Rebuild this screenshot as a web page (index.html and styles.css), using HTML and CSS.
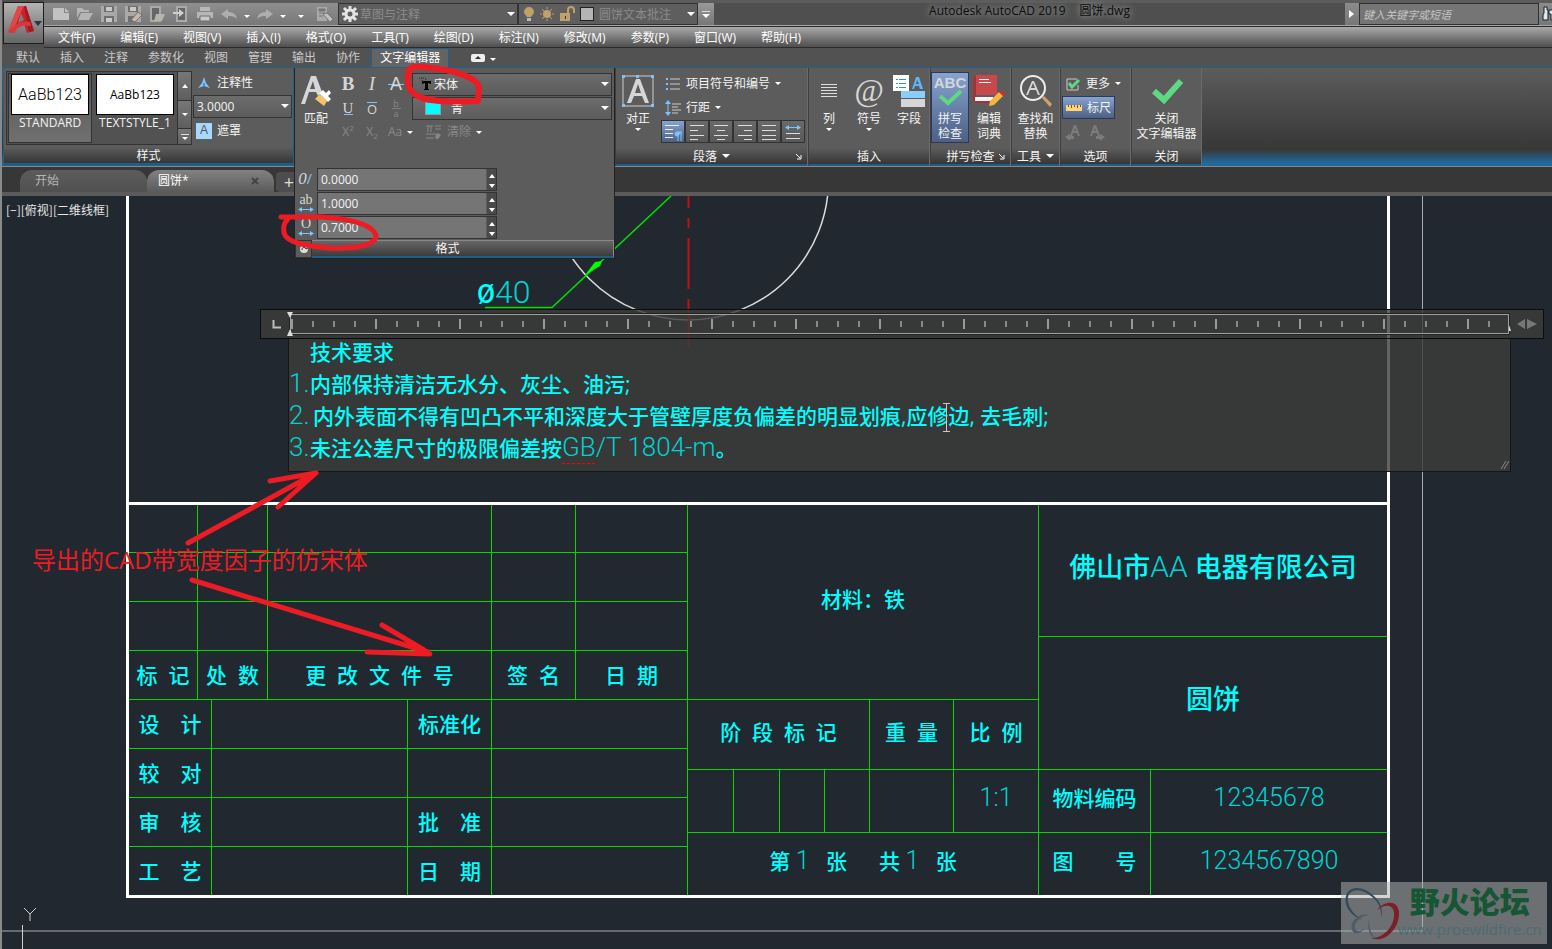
FILE: index.html
```html
<!DOCTYPE html>
<html lang="zh-CN">
<head>
<meta charset="UTF-8">
<title>Autodesk AutoCAD 2019 - 圆饼.dwg</title>
<link rel="stylesheet" href="styles.css">
</head>

<body>

<header class="top">
  <button class="app-button" aria-label="应用程序菜单">
    <svg width="40" height="40" viewBox="0 0 40 40">
      <path d="M4 29L14 3H22L30 28L23 30L20 21L13 24L10 30Z" fill="#c8232a"/>
      <path d="M14 3H20L17 9L8 30L4 29Z" fill="#e2484a"/>
      <path d="M20 3H22L30 28L25 29Z" fill="#a51a20"/>
      <path d="M17 10L20 17L14 20Z" fill="#7d7d7d"/>
      <path d="M4 29C10 21 18 18 26 19L27 23C19 21 13 24 10 30Z" fill="#d9393c"/>
      <path d="M30 18H38L34 23Z" fill="#2d3340"/>
    </svg>
  </button>

  <div class="title-bar">
    <div class="quick-access">
      <button class="qa" aria-label="新建"><svg width="24" height="20"><path d="M4 4H15V9H20V16H4ZM16 4L20 8H16Z" fill="#c2c2c2"/></svg></button>
      <button class="qa" aria-label="打开"><svg width="24" height="20"><path d="M4 4H9L11 6H16V8H7L4 14Z M8 9H20L16 16H5Z" fill="#b5b5b5"/></svg></button>
      <button class="qa" aria-label="保存"><svg width="24" height="20"><path d="M4 2H20V18H4Z" fill="#a9a9a9"/><path d="M7 2H17V8H7ZM7 12H17V18H7Z" fill="#6f6f6f"/><path d="M9 3H15V7H9ZM9 14H15V18H9Z" fill="#c9c9c9"/></svg></button>
      <button class="qa" aria-label="另存为"><svg width="24" height="20"><path d="M4 2H20V18H4Z" fill="#a9a9a9"/><path d="M7 2H17V8H7ZM7 12H13V18H7Z" fill="#6f6f6f"/><path d="M9 3H15V7H9Z" fill="#c9c9c9"/><path d="M10 16L17 8L21 11L14 18Z" fill="#c9b7a8" stroke="#6f6f6f"/></svg></button>
      <button class="qa" aria-label="从 Web 打开"><svg width="24" height="20"><path d="M6 3H15V17H6Z" fill="#666" stroke="#aaa" stroke-width="2"/><path d="M11 10H20L17 17H9Z" fill="#b9b4aa"/></svg></button>
      <button class="qa" aria-label="保存到 Web"><svg width="24" height="20"><path d="M8 3H17V17H8Z" fill="#666" stroke="#aaa" stroke-width="2"/><path d="M4 8H10V5L15 9L10 13V10H4Z" fill="#cfcfcf"/></svg></button>
      <button class="qa" aria-label="打印"><svg width="24" height="20"><path d="M7 3H17V7H7ZM4 8H20V14H4Z" fill="#b7b7b7"/><path d="M7 12H17V17H7Z" fill="#c8c8c8" stroke="#6f6f6f"/></svg></button>
      <button class="qa" aria-label="放弃"><svg width="24" height="20"><path d="M4 10L11 5V8C16 8 19 10 20 15C17 12 15 12 11 12V15Z" fill="#aeaeae"/></svg></button>
      <button class="qa-drop" aria-label="放弃列表"><span class="tri"></span></button>
      <button class="qa" aria-label="重做"><svg width="24" height="20"><path d="M20 10L13 5V8C8 8 5 10 4 15C7 12 9 12 13 12V15Z" fill="#aeaeae"/></svg></button>
      <button class="qa-drop" aria-label="重做列表"><span class="tri"></span></button>
      <button class="qa-drop qa-more" aria-label="自定义"><span class="tri"></span></button>
      <button class="qa" aria-label="特性匹配"><svg width="24" height="20"><path d="M4 3H14V17H4Z" fill="#a9a9a9"/><path d="M6 5H12V7H6ZM6 9H12M6 12H10" fill="#777" stroke="#777"/><path d="M10 10L14 9L20 15L17 18Z" fill="#c0c0c0" stroke="#777"/></svg></button>
    </div>
    <div class="combo combo-dark combo-workspace">
      <svg width="16" height="16" viewBox="0 0 16 16"><circle cx="8" cy="8" r="4" fill="none" stroke="#e4e4e4" stroke-width="3"/><path d="M8 0V3M8 13V16M0 8H3M13 8H16M2 2L5 5M11 11L14 14M14 2L11 5M5 11L2 14" stroke="#e4e4e4" stroke-width="3"/></svg>
      <select aria-label="工作空间"><option>草图与注释</option></select>
    </div>
    <div class="combo combo-dark combo-layer">
      <svg width="56" height="18" viewBox="0 0 56 18">
        <path d="M2 7A5 5 0 0 1 12 7C12 9 10 10 9 12H5C4 10 2 9 2 7Z" fill="#c0a268"/><path d="M5 13H9V16H5Z" fill="#b9b9b9"/>
        <circle cx="25" cy="9" r="4" fill="#c0a268"/><path d="M25 2V4M25 14V16M18 9H20M30 9H32M20 4L22 6M28 12L30 14M30 4L28 6M22 12L20 14" stroke="#c0a268" stroke-width="1"/>
        <path d="M38 8H48V16H38Z" fill="#c0a268"/><path d="M46 8V5A3 3 0 0 1 52 5V8" fill="none" stroke="#c0a268" stroke-width="2"/><path d="M43 11H44V14H43Z" fill="#333"/>
      </svg>
      <span class="layer-color"></span>
      <select aria-label="图层"><option>圆饼文本批注</option></select>
    </div>
    <button class="qa-chevron" aria-label="更多工具"><span class="bar"></span><span class="tri tri-big"></span></button>
    <h1 class="app-title"><span>Autodesk AutoCAD 2019</span><span>圆饼.dwg</span></h1>
    <div class="search">
      <button class="search-arrow" aria-label="展开搜索"><svg width="6" height="8"><path d="M0 0L5 4L0 8Z" fill="#fff"/></svg></button>
      <input type="text" placeholder="键入关键字或短语" aria-label="键入关键字或短语">
      <button class="search-go" aria-label="搜索"><svg width="16" height="16"><path d="M5 1H8V4H9V14H4V9L5 7ZM10 4H14V7H16V14H12V8H10Z" fill="#dfe6ee" stroke="#1b2026" stroke-width="1"/></svg></button>
    </div>
  </div>

  <nav class="menu-bar">
    <a href="#">文件(F)</a>
    <a href="#">编辑(E)</a>
    <a href="#">视图(V)</a>
    <a href="#">插入(I)</a>
    <a href="#">格式(O)</a>
    <a href="#">工具(T)</a>
    <a href="#">绘图(D)</a>
    <a href="#">标注(N)</a>
    <a href="#">修改(M)</a>
    <a href="#">参数(P)</a>
    <a href="#">窗口(W)</a>
    <a href="#">帮助(H)</a>
  </nav>
</header>

<nav class="ribbon-tabs">
  <a href="#">默认</a>
  <a href="#">插入</a>
  <a href="#">注释</a>
  <a href="#">参数化</a>
  <a href="#">视图</a>
  <a href="#">管理</a>
  <a href="#">输出</a>
  <a href="#">协作</a>
  <a href="#" class="active">文字编辑器</a>
  <button class="minimize" aria-label="最小化功能区"><svg width="14" height="8"><rect x="0" y="0" width="14" height="8" rx="2" fill="#eee"/><path d="M4 5L7 2L10 5Z" fill="#333"/></svg></button>
  <button class="minimize" aria-label="功能区选项"><span class="tri"></span></button>
</nav>

<div class="ribbon">
  <!-- text style -->
  <section class="panel panel-style">
    <div class="panel-body">
      <div class="gallery">
        <button class="style selected"><span class="swatch swatch-cad">AaBb123</span>STANDARD</button>
        <button class="style"><span class="swatch">AaBb123</span>TEXTSTYLE_1</button>
        <div class="gallery-scroll">
          <button aria-label="上一行"><span class="tri up"></span></button>
          <button aria-label="下一行"><span class="tri"></span></button>
          <button aria-label="展开"><span class="bar"></span><span class="tri"></span></button>
        </div>
      </div>
      <div class="rows style-rows">
        <button class="row"><svg width="16" height="16"><path d="M8 2L10 8L14 13L8 11L2 13L6 8Z" fill="#7cc4ff"/><path d="M8 8V11" stroke="#555"/></svg>注释性</button>
        <div class="combo combo-height"><select aria-label="文字高度"><option>3.0000</option></select></div>
        <button class="row"><span class="mask-icon">A</span>遮罩</button>
      </div>
    </div>
    <h2>样式</h2>
  </section>

  <!-- character format, slid open over the drawing -->
  <section class="panel panel-format">
    <div class="flyout">
      <div class="panel-body">
        <button class="big match">
          <svg width="34" height="34" viewBox="0 0 34 34"><path d="M2 29L12 1H17L23 17L19 21L17 17H10L6 29ZM11 14H16L14 6Z" fill="#d6d6d6"/><path d="M16 24L21 19L28 26L25 31Z" fill="#f6c468"/><path d="M20 18L24 15L27 18L30 15L32 18L29 21L32 24L29 27Z" fill="#fff"/></svg>
          匹配
        </button>
        <div class="format-rows">
          <div class="format-row">
            <button class="glyph serif bold">B</button>
            <button class="glyph serif italic">I</button>
            <button class="glyph strike">A</button>
            <div class="combo combo-font">
              <svg width="14" height="14"><path d="M0 1H7V3M0 1V3M3 1V7" fill="none" stroke="#333" stroke-dasharray="1 1"/><path d="M3 4H12V7H11L10 6H9V12H10V13H5V12H6V6H5L4 7H3Z" fill="#000"/></svg>
              <select aria-label="字体"><option>宋体</option></select>
            </div>
          </div>
          <div class="format-row">
            <button class="glyph under">U</button>
            <button class="glyph over">O</button>
            <button class="glyph dim stack"><span>b</span><span>a</span></button>
            <div class="combo combo-color">
              <span class="color-chip"></span>
              <select aria-label="颜色"><option>青</option></select>
            </div>
          </div>
          <div class="format-row">
            <button class="glyph dim">X<sup>2</sup></button>
            <button class="glyph dim">X<sub>2</sub></button>
            <button class="glyph dim case">Aa<span class="tri"></span></button>
            <button class="glyph dim clear"><svg width="16" height="16"><path d="M0 2H7M2 2V8M5 2V8M9 2H15M9 5H15M0 10H10M0 14H8" stroke="#888" fill="none"/><path d="M9 12L12 9L15 11L12 15H10Z" fill="#888"/></svg>清除<span class="tri"></span></button>
          </div>
        </div>
      </div>
      <div class="spinners">
        <label for="oblique" class="spin-icon" aria-label="倾斜角度"><i class="slanted">0</i><span class="slash">/</span></label>
        <div class="spinner"><input id="oblique" type="text" value="0.0000"><button aria-label="增加"><span class="tri up"></span></button><button aria-label="减少"><span class="tri"></span></button></div>
        <label for="tracking" class="spin-icon" aria-label="追踪"><span class="wide">ab</span><svg width="16" height="5"><path d="M2 2.500H14" stroke="#7cc4ff"/><path d="M0 2.500L4 0V5ZM16 2.500L12 0V5Z" fill="#7cc4ff"/></svg></label>
        <div class="spinner"><input id="tracking" type="text" value="1.0000"><button aria-label="增加"><span class="tri up"></span></button><button aria-label="减少"><span class="tri"></span></button></div>
        <label for="width" class="spin-icon" aria-label="宽度因子"><span class="wide">O</span><svg width="16" height="5"><path d="M2 2.500H14" stroke="#7cc4ff"/><path d="M0 2.500L4 0V5ZM16 2.500L12 0V5Z" fill="#7cc4ff"/></svg></label>
        <div class="spinner"><input id="width" type="text" value="0.7000"><button aria-label="增加"><span class="tri up"></span></button><button aria-label="减少"><span class="tri"></span></button></div>
      </div>
      <div class="flyout-title">
        <button class="pin" aria-label="固定"><svg width="10" height="10"><circle cx="5" cy="5" r="4" fill="#ddd"/><path d="M3 6A2 2 0 1 1 7 5L9 4" fill="none" stroke="#333"/></svg></button>
        <h2>格式</h2>
      </div>
    </div>
  </section>

  <!-- paragraph -->
  <section class="panel panel-paragraph">
    <div class="panel-body">
      <button class="big">
        <svg width="32" height="32"><path d="M3 1H29M3 31H29M1 3V29M31 3V29" stroke="#ccc"/><path d="M0 0H3V3H0ZM14 0H17V3H14ZM29 0H32V3H29ZM0 29H3V32H0ZM29 29H32V32H29Z" fill="#7cc4ff"/><path d="M5 28L14 4H18L27 28H23L20 21H12L9 28ZM13 18H19L16 9Z" fill="#d6d6d6"/></svg>
        对正<span class="tri"></span>
      </button>
      <div class="rows">
        <button class="row"><svg width="16" height="16"><path d="M5 3H15M5 8H15M5 13H15" stroke="#ccc"/><path d="M1 2H3V4H1ZM1 7H3V9H1ZM1 12H3V14H1Z" fill="#7cc4ff"/></svg>项目符号和编号<span class="tri"></span></button>
        <button class="row"><svg width="16" height="16"><path d="M3 2V14" stroke="#7cc4ff" stroke-width="1"/><path d="M0 4L3 0L6 4ZM0 12L3 16L6 12Z" fill="#7cc4ff"/><path d="M7 4H16M7 7H13M7 10H16M7 13H13" stroke="#ccc"/></svg>行距<span class="tri"></span></button>
        <div class="aligns">
          <button class="on" aria-label="默认"><svg width="20" height="18"><path d="M2 2.500H16M2 6.500H10M2 10.500H10M2 14.500H10" stroke="#eee"/><path d="M18 9V18M15 9V18M19 9H14A2 2 0 0 0 14 13H15" stroke="#7cc4ff" fill="#7cc4ff"/></svg></button>
          <button aria-label="左对齐"><svg width="20" height="18"><path d="M3 2.500H17M3 7.500H11M3 12.500H17M3 16.500H11" stroke="#ddd"/></svg></button>
          <button aria-label="居中"><svg width="20" height="18"><path d="M3 2.500H17M6 7.500H14M3 12.500H17M6 16.500H14" stroke="#ddd"/></svg></button>
          <button aria-label="右对齐"><svg width="20" height="18"><path d="M3 2.500H17M9 7.500H17M3 12.500H17M9 16.500H17" stroke="#ddd"/></svg></button>
          <button aria-label="两端对齐"><svg width="20" height="18"><path d="M3 2.500H17M3 7.500H17M3 12.500H17M3 16.500H17" stroke="#ddd"/></svg></button>
          <button aria-label="分散对齐"><svg width="20" height="18"><path d="M5 4.500H15" stroke="#7cc4ff"/><path d="M2 4.500L6 2V7ZM18 4.500L14 2V7Z" fill="#7cc4ff"/><path d="M3 10.500H17M3 15.500H17" stroke="#ddd"/></svg></button>
        </div>
      </div>
    </div>
    <h2>段落<span class="tri tri-big"></span><svg class="launcher" width="6" height="6"><path d="M0 0L4 4M5 1V5H1" stroke="#fff" fill="none"/></svg></h2>
  </section>

  <!-- insert -->
  <section class="panel panel-insert">
    <div class="panel-body">
      <button class="big"><svg width="32" height="32"><path d="M8 9.500H24M8 12.500H24M8 15.500H24M8 18.500H24M8 21.500H24" stroke="#ddd"/></svg>列<span class="tri"></span></button>
      <button class="big"><span class="at">@</span>符号<span class="tri"></span></button>
      <button class="big"><svg width="32" height="32"><path d="M0 0H16V16H0Z" fill="#fff"/><path d="M6 4.500H13M6 8.500H13M6 12.500H13" stroke="#2f8fe0"/><path d="M3 4H5V5H3ZM3 8H5V9H3ZM3 12H5V13H3Z" fill="#2f8fe0"/><path d="M19 14L23 2H26L30 14H27L26 11H22L21 14ZM23 9H26L24 5Z" fill="#5fb4f4"/><path d="M8 16H32V23H8Z" fill="#8ccdff"/><path d="M8 24H32V32H8Z" fill="#d6d6d6"/></svg>字段</button>
    </div>
    <h2>插入</h2>
  </section>

  <!-- spell check -->
  <section class="panel panel-spell">
    <div class="panel-body">
      <button class="big on"><svg width="32" height="32"><text x="16" y="13" text-anchor="middle" class="abc">ABC</text><path d="M6 21L14 28L27 16" fill="none" stroke="#5fd884" stroke-width="4"/></svg>拼写<br>检查</button>
      <button class="big"><svg width="32" height="32"><path d="M3 0H24V20H3V27H1V3Z" fill="#c9484c"/><path d="M0 3L3 0V28L0 26Z" fill="#a43337"/><path d="M6 4.500H16M6 7.500H18" stroke="#fff"/><path d="M2 22H20V26H2Z" fill="#f2f2f2"/><path d="M2 26H20V28H2Z" fill="#a43337"/><path d="M17 26L26 17L30 21L21 30L16 31Z" fill="#f6b73c"/><path d="M26 17L29 16L32 19L30 21Z" fill="#e22"/></svg>编辑<br>词典</button>
    </div>
    <h2>拼写检查<svg class="launcher" width="6" height="6"><path d="M0 0L4 4M5 1V5H1" stroke="#fff" fill="none"/></svg></h2>
  </section>

  <!-- tools -->
  <section class="panel panel-tools">
    <div class="panel-body">
      <button class="big"><svg width="32" height="32"><path d="M22 23L24 21L32 29L30 32Z" fill="#d3a06b"/><circle cx="13" cy="13" r="12" fill="none" stroke="#eee" stroke-width="2"/><path d="M6 20L12 6H14L20 20H18L16 15H10L8 20ZM11 13H15L13 8Z" fill="#d6d6d6"/></svg>查找和<br>替换</button>
    </div>
    <h2>工具<span class="tri tri-big"></span></h2>
  </section>

  <!-- options -->
  <section class="panel panel-options">
    <div class="panel-body rows">
      <button class="row"><svg width="16" height="16"><path d="M13 9V14H2V3H12" fill="none" stroke="#ccc"/><path d="M4 7L7 11L14 4" fill="none" stroke="#5fd884" stroke-width="3"/></svg>更多<span class="tri"></span></button>
      <button class="row on"><svg width="16" height="16"><path d="M0 5H16V11H0Z" fill="#ffd76e"/><path d="M2.500 5V7M5.500 5V8M8.500 5V7M11.500 5V8M14.500 5V7" stroke="#555"/></svg>标尺</button>
      <div class="undo-pair">
        <button class="glyph dim" aria-label="放弃"><svg width="16" height="17"><path d="M5 12L9 1H11L15 12H13L12 9H8L7 12ZM9 7H11L10 4Z" fill="#7c7c7c"/><path d="M0 13L5 10V12H9V15H5V17Z" fill="#7c7c7c"/></svg></button>
        <button class="glyph dim" aria-label="重做"><svg width="16" height="17"><path d="M1 12L5 1H7L11 12H9L8 9H4L3 12ZM5 7H7L6 4Z" fill="#7c7c7c"/><path d="M16 13L11 10V12H7V15H11V17Z" fill="#7c7c7c"/></svg></button>
      </div>
    </div>
    <h2>选项</h2>
  </section>

  <!-- close -->
  <section class="panel panel-close">
    <div class="panel-body">
      <button class="big"><svg width="32" height="32"><path d="M3 16L13 25L30 6" fill="none" stroke="#5fd884" stroke-width="6"/></svg>关闭<br>文字编辑器</button>
    </div>
    <h2>关闭</h2>
  </section>
</div>

<nav class="doc-tabs">
  <a href="#">开始</a>
  <a href="#" class="current">圆饼*<svg width="8" height="8"><path d="M1 1L7 7M7 1L1 7" stroke="#444" stroke-width="2"/></svg></a>
  <button aria-label="新图形">+</button>
</nav>

<main class="canvas">
  <div class="view-label">[−][俯视][二维线框]</div>

  <svg class="geometry" width="1550" height="753" viewBox="2 196 1550 753">
    <path d="M1422.500 196V931M2 931H1423" stroke="#a9acb0" fill="none"/>
    <circle cx="688.500" cy="180" r="140" fill="none" stroke="#dcdcdc" stroke-width="1.500"/>
    <path d="M485 307.500H552L671 196" fill="none" stroke="#00e000" stroke-width="1.500"/>
    <path d="M585 275L595 262L602 261L600 266Z" fill="#00ff00"/>
    <path d="M688.500 196V208M688.500 218V228M688.500 238V289M688.500 299V347" stroke="#c01015" stroke-width="2"/>
    <path d="M24 908L30 914L36 908M30 914V921M22.500 925V949" stroke="#d0d0d0" fill="none"/>
  </svg>
  <div class="dimension"><b>Ø</b>40</div>

  <div class="frame">
    <div class="title-block">
      <div class="tb-left">
        <table class="changes">
          <colgroup><col class="w69"><col class="w70"><col class="w224"><col class="w84"><col class="w112"></colgroup>
          <tr><td></td><td></td><td></td><td></td><td></td></tr>
          <tr><td></td><td></td><td></td><td></td><td></td></tr>
          <tr><td></td><td></td><td></td><td></td><td></td></tr>
          <tr><th>标  记</th><th>处  数</th><th>更  改  文  件  号</th><th>签  名</th><th>日  期</th></tr>
        </table>
        <table class="signs">
          <colgroup><col class="w83"><col class="w196"><col class="w84"><col class="w196"></colgroup>
          <tr><th>设　计</th><td></td><th>标准化</th><td></td></tr>
          <tr><th>较　对</th><td></td><td></td><td></td></tr>
          <tr><th>审　核</th><td></td><th>批　准</th><td></td></tr>
          <tr><th>工　艺</th><td></td><th>日　期</th><td></td></tr>
        </table>
      </div>
      <table class="tb-middle">
        <colgroup><col class="w46"><col class="w46"><col class="w45"><col class="w45"><col class="w84"><col class="w85"></colgroup>
        <tr class="h195"><td colspan="6">材料：铁</td></tr>
        <tr class="h70"><th colspan="4">阶  段  标  记</th><th>重  量</th><th>比  例</th></tr>
        <tr class="h63"><td></td><td></td><td></td><td></td><td></td><td><span class="thin">1:1</span></td></tr>
        <tr class="h62"><td colspan="6">第 <span class="thin">1</span>   张　  共 <span class="thin">1</span>   张</td></tr>
      </table>
      <table class="tb-right">
        <colgroup><col class="w112"><col class="w236"></colgroup>
        <tr class="h132"><td colspan="2" class="large">佛山市<span class="thin">AA</span> 电器有限公司</td></tr>
        <tr class="h133"><td colspan="2" class="large">圆饼</td></tr>
        <tr class="h63"><th>物料编码</th><td><span class="thin">12345678</span></td></tr>
        <tr class="h62"><th>图　　号</th><td><span class="thin">1234567890</span></td></tr>
      </table>
    </div>
  </div>

  <!-- in-place text editor -->
  <div class="editor">
    <div class="ruler">
      <svg width="29" height="28"><path d="M12.500 10V17.500H20" fill="none" stroke="#bbb" stroke-width="2"/></svg>
      <svg class="ruler-scale" height="28">
        <defs>
          <pattern id="ticks" width="84" height="28" patternUnits="userSpaceOnUse">
            <path d="M1 4V14" stroke="#999" stroke-width="2"/>
            <path d="M22 6V12M43 6V12M64 6V12" stroke="#888" stroke-width="2"/>
          </pattern>
        </defs>
        <rect x="0" y="0" width="100%" height="28" fill="url(#ticks)"/>
      </svg>
      <svg width="34" height="28"><path d="M0 15L2 21H0Z" fill="#ddd"/><path d="M8 14L16 9V19ZM18 9V19L28 14Z" fill="#777"/></svg>
      <svg class="indent" width="6" height="24"><path d="M0 0H6L3 6ZM0 24H6L3 17Z" fill="#ddd"/></svg>
    </div>
    <div class="note" contenteditable="true" role="textbox" aria-label="多行文字" spellcheck="false">
      <p class="note-head">技术要求</p>
      <p><span class="thin num">1.</span>内部保持清洁无水分、灰尘、油污;</p>
      <p><span class="thin num num-wide">2.</span>内外表面不得有凹凸不平和深度大于管壁厚度负偏差的明显划痕,应修边, 去毛刺;</p>
      <p><span class="thin num">3.</span>未注公差尺寸的极限偏差按<span class="thin code"><span class="misspelt">GB</span>/T 1804-m</span>。</p>
    </div>
    <svg class="grip" width="10" height="10"><path d="M1 9L6 1M4 9L9 1" stroke="#888"/></svg>
  </div>
  <svg class="ibeam" width="7" height="29"><path d="M0 .500H7M3.500 0V29M0 28.500H7" stroke="#d9c3b8"/></svg>

  <div class="watermark">
    <svg width="62" height="62" viewBox="0 0 62 62">
      <path d="M5 22C2 6 16 2 28 10C38 17 43 25 40 36C41 24 36 18 27 12C17 5 5 8 7 20C9 28 14 33 21 38C12 34 7 29 5 22Z" fill="#33495c"/>
      <path d="M36 28C44 18 57 18 58 30C59 46 44 62 30 56C40 57 54 46 53 31C52 22 44 22 36 28Z" fill="#7c1f2b"/>
      <path d="M28 33C18 30 8 40 11 48C13 53 20 52 24 46C20 50 15 50 14 46C13 40 20 34 28 33ZM28 38C26 46 28 54 35 57C30 52 28 46 28 38Z" fill="#4f5d6b"/>
    </svg>
    <div class="watermark-text">
      <strong>野火论坛</strong>
      <span>www.proewildfire.cn</span>
    </div>
  </div>
</main>

<!-- red pen remarks drawn over the window -->
<div class="remark">导出的CAD带宽度因子的仿宋体</div>
<svg class="pen" width="560" height="700">
  <path d="M408 72C409 66 418 66 432 68C452 70 470 76 477 83C481 88 478 94 478 101C460 102 436 102 422 98C410 94 405 84 409 72" stroke-width="6"/>
  <path d="M281 217H322C352 219 372 225 376 235C377 246 352 249 330 248C306 246 287 243 284 233C283 226 284 223 288 219" stroke-width="5"/>
  <path d="M188 543L316 473M270 481L316 473L278 507" stroke-width="5"/>
  <path d="M192 580L428 652M382 625L424 650M367 652L430 654" stroke-width="5"/>
</svg>

</body>
</html>
```

FILE: styles.css
```css
* {
  box-sizing: border-box;
}
body {
  position: relative;
  display: flex;
  flex-direction: column;
  min-height: 100vh;
  margin: 0;
  overflow-x: hidden;
  border-left: 2px solid #8a8a8a;
  background-color: #4f4f4f;
  color: #f4f4f4;
  font-family: "Open Sans", "Noto Sans CJK SC", sans-serif;
  font-size: 12px;
  line-height: 15px;
}
a {
  color: inherit;
  text-decoration: none;
}
button, select, input {
  margin: 0;
  padding: 0;
  border: 0;
  background: none;
  color: inherit;
  font: inherit;
}
h1, h2, p {
  margin: 0;
  font-size: 12px;
  font-weight: 400;
}
svg {
  display: block;
  flex: none;
}

/* small arrows */
.tri {
  display: inline-block;
  border: 3px solid transparent;
  border-top-color: #fff;
  border-bottom: 0;
}
.tri.up {
  border-top: 0;
  border-bottom: 4px solid #fff;
}
.tri-big {
  border-width: 4px;
  border-bottom: 0;
}
.bar {
  display: block;
  width: 8px;
  height: 1px;
  margin-bottom: 2px;
  background-color: #ddd;
}

/* drop-downs */
.combo {
  position: relative;
  display: flex;
  align-items: center;
  height: 23px;
  border: 1px solid #333;
  background: linear-gradient(#6c6c6c, #5c5c5c);
}
.combo::after {
  content: "";
  position: absolute;
  right: 2px;
  top: 8px;
  border: 4px solid transparent;
  border-top: 4px solid #fff;
  border-bottom: 0;
  pointer-events: none;
}
.combo select {
  flex: 1;
  min-width: 0;
  height: 100%;
  appearance: none;
}

/* title bar */
.top {
  display: grid;
  grid-template-columns: 42px 1fr;
  grid-template-rows: 26px 22px;
}
.app-button {
  grid-row: 1 / 3;
  margin: 2px 0 4px 1px;
  border: 1px solid #1c1c1c;
  background: linear-gradient(#b4b4b4, #666);
}
.title-bar {
  display: flex;
  align-items: flex-start;
  padding-top: 3px;
  border-bottom: 1px solid #a6a6a6;
  box-shadow: inset 0 3px #5c5c5c;
}
.quick-access {
  display: flex;
  align-items: center;
  width: 294px;
  height: 22px;
  padding-left: 5px;
  background: linear-gradient(#8f8f8f, #787878);
}
.qa {
  width: 24px;
}
.qa-drop {
  width: 12px;
  line-height: 5px;
}
.qa-more {
  margin: 0 6px;
}
.combo-dark {
  width: 180px;
  height: 22px;
  padding-left: 2px;
  background: #5e5e5e;
  color: #8b8b8b;
}
.combo-workspace svg {
  margin: 0 2px 0 1px;
}
.layer-color {
  width: 14px;
  height: 14px;
  margin: 0 5px 0 2px;
  border: 1px solid #222;
  background-color: #b4b4b4;
}
.combo-layer {
  padding-left: 3px;
}
.qa-chevron {
  display: flex;
  flex-direction: column;
  align-items: center;
  justify-content: center;
  width: 16px;
  height: 22px;
  background: linear-gradient(#999, #777);
}
.app-title {
  display: flex;
  flex: 1;
  justify-content: center;
  gap: 14px;
  color: #0c0c0c;
  text-shadow: 0 0 8px #999, 0 0 6px #888;
}
.search {
  display: flex;
  height: 22px;
  background: linear-gradient(#8c8c8c, #777);
}
.search-arrow {
  width: 14px;
  padding-left: 4px;
}
.search input {
  width: 180px;
  padding-left: 3px;
  border: 1px solid #2f2f2f;
  background-color: #757575;
  font-size: 11px;
}
.search input::placeholder {
  color: #c4c4c4;
  font-style: italic;
}
.search-go {
  width: 13px;
  overflow: hidden;
}

.menu-bar {
  display: flex;
  align-items: center;
  gap: 25px;
  padding-left: 14px;
  border-top: 1px solid #2a2a2a;
  border-bottom: 1px solid #2c2c2c;
  background: linear-gradient(#a9a9a9, #4e4e4e);
  color: #fff;
}

/* ribbon tabs */
.ribbon-tabs {
  display: flex;
  align-items: flex-end;
  height: 20px;
  padding-left: 6px;
  border-bottom: 1px solid #21608c;
  background-color: #525252;
  color: #c9c9c9;
}
.ribbon-tabs a {
  padding: 0 10px 1px 10px;
  line-height: 17px;
  margin-left: -2px;
  margin-right: 2px;
}
.ribbon-tabs a:first-child {
  margin-left: 0;
  padding-left: 8px;
}
.ribbon-tabs .active {
  padding: 0 8px 1px 8px;
  margin: 0 22px 0 -1px;
  border: 1px solid #21608c;
  border-bottom: 0;
  background-color: #646464;
  color: #fff;
}
.minimize {
  align-self: center;
  margin-right: 5px;
  line-height: 5px;
}

/* ribbon */
.ribbon {
  display: flex;
  height: 99px;
  border-bottom: 1px solid #888;
  background: linear-gradient(#5c5c5c, #373737 83%, #1f6b9f 97%);
}
.panel {
  position: relative;
  display: flex;
  flex: none;
  flex-direction: column;
  border-left: 1px solid #3e3e3e;
  border-right: 1px solid #6a6a6a;
  background-color: #5c5c5c;
}
.panel-body {
  display: flex;
  flex: 1;
  align-items: flex-start;
  padding-top: 4px;
}
.panel h2 {
  display: flex;
  align-items: center;
  justify-content: center;
  gap: 5px;
  height: 18px;
  border-bottom: 2px solid #1f5d88;
  background: linear-gradient(#5c5c5c, #363636);
}
.launcher {
  position: absolute;
  right: 5px;
  bottom: 6px;
}
.rows {
  display: flex;
  flex-direction: column;
  gap: 1px;
}
.row {
  display: flex;
  align-items: center;
  gap: 5px;
  height: 23px;
}
.big {
  flex: none;
  width: 40px;
  padding-top: 3px;
  text-align: center;
  line-height: 15px;
}
.big svg {
  margin: 0 auto 4px;
}
.big .tri {
  display: block;
  width: 6px;
  margin: 2px auto 0;
}
.on {
  border: 1px solid #2b3a5a;
  background: linear-gradient(#86a3d2, #4d6084);
}

.panel-style {
  width: 291px;
  margin-left: 1px;
  border: 1px solid #21608c;
  border-top: 0;
}
.panel-style .panel-body {
  padding: 3px 0 0 2px;
}
.gallery {
  display: flex;
  height: 74px;
  border: 1px solid #333;
  background-color: #525252;
}
.style {
  display: flex;
  flex-direction: column;
  align-items: center;
  width: 84px;
  margin: 1px 0 1px 1px;
  border: 1px solid transparent;
}
.style.selected {
  border-color: #333;
  background: linear-gradient(#555, #707070);
}
.swatch {
  width: 78px;
  height: 41px;
  border: 1px solid #000;
  background-color: #fff;
  color: #000;
  font-size: 12px;
  line-height: 40px;
}
.swatch-cad {
  font-family: Roboto, sans-serif;
  font-size: 16px;
  font-weight: 300;
}
.gallery-scroll {
  display: flex;
  flex-direction: column;
  width: 14px;
  border-left: 1px solid #333;
}
.gallery-scroll button {
  display: flex;
  flex: 1;
  flex-direction: column;
  align-items: center;
  justify-content: center;
  border-bottom: 1px solid #333;
  background: linear-gradient(#777, #5e5e5e);
}
.gallery-scroll button:last-child {
  flex: none;
  height: 15px;
  border-bottom: 0;
}
.style-rows {
  margin-left: 1px;
}
.style-rows .row {
  padding-left: 3px;
}
.combo-height {
  width: 99px;
  padding-left: 3px;
}
.mask-icon {
  width: 16px;
  height: 16px;
  background-color: #a9d8ff;
  color: #555;
  font-family: "Liberation Sans", sans-serif;
}

.panel-format {
  z-index: 2;
  width: 321px;
}
.flyout {
  position: absolute;
  top: 0;
  left: -1px;
  right: -1px;
  height: 191px;
  display: flex;
  flex-direction: column;
  border: 1px solid #222;
  border-top: 0;
  background-color: #5c5c5c;
}
.flyout .panel-body {
  padding-left: 1px;
}
.match {
  width: 40px;
}
.match svg {
  margin-bottom: 2px;
}
.format-row {
  display: flex;
  align-items: center;
  height: 24px;
}
.glyph {
  width: 24px;
  height: 24px;
  color: #d6d6d6;
  line-height: 22px;
}
.serif {
  font-family: "Liberation Serif", serif;
  font-size: 19px;
}
.bold {
  font-weight: 700;
}
.italic {
  font-style: italic;
}
.strike {
  background: linear-gradient(#7cc4ff, #7cc4ff) center 12px / 16px 1px no-repeat;
  font-family: "Liberation Sans", sans-serif;
  font-size: 18px;
}
.under {
  background: linear-gradient(#7cc4ff, #7cc4ff) center 18px / 9px 1px no-repeat;
  font-family: "Liberation Serif", serif;
  font-size: 15px;
}
.over {
  background: linear-gradient(#7cc4ff, #7cc4ff) center 6px / 10px 1px no-repeat;
  font-size: 13px;
  line-height: 26px;
}
.dim {
  color: #898989;
}
.stack span {
  display: block;
  width: 9px;
  margin: 0 auto;
  font-size: 9px;
  line-height: 9px;
}
.stack span + span {
  border-top: 1px solid #808080;
}
.glyph sup, .glyph sub {
  font-size: 8px;
  line-height: 1px;
}
.case {
  display: flex;
  align-items: center;
  gap: 5px;
  width: 36px;
  padding-left: 4px;
}
.clear {
  display: flex;
  align-items: center;
  gap: 5px;
  width: 70px;
  margin-left: 6px;
}
.combo-font, .combo-color {
  width: 200px;
  margin-left: 4px;
  padding-left: 6px;
  gap: 1px;
}
.color-chip {
  width: 16px;
  height: 13px;
  margin: 0 9px 0 6px;
  border: 1px solid #999;
  background-color: #00ffff;
}
.spinners {
  display: grid;
  grid-template-columns: 18px 180px;
  gap: 1px 3px;
  padding-left: 1px;
  margin-bottom: 1px;
}
.spin-icon {
  height: 23px;
  color: #d6d6d6;
  line-height: 22px;
  text-align: center;
}
.spin-icon svg {
  margin-left: 2px;
}
.slanted {
  font-family: "Liberation Serif", serif;
  font-size: 17px;
}
.slash {
  color: #7cc4ff;
  font-size: 14px;
}
.wide {
  display: block;
  height: 15px;
  margin-left: 2px;
  font-family: "Liberation Serif", serif;
  font-size: 14px;
  line-height: 16px;
}
.spinner {
  display: grid;
  grid-template-columns: 1fr 10px;
  height: 23px;
  border: 1px solid #333;
}
.spinner input {
  grid-row: 1 / 3;
  min-width: 0;
  padding-left: 3px;
  background-color: #757575;
}
.spinner button {
  margin-left: 1px;
  background-color: #4a4a4a;
  line-height: 6px;
}
.spinner .tri {
  border-top-width: 4px;
}
.spinner .tri.up {
  border-top-width: 0;
}
.flyout-title {
  display: flex;
  height: 18px;
}
.pin {
  width: 17px;
  padding-left: 3px;
  border: 1px solid #333;
}
.flyout-title h2 {
  flex: 1;
  height: 100%;
  padding-right: 30px;
  border-top: 1px solid #888;
  border-right: 1px solid #888;
  background: linear-gradient(#666, #3c3c3c);
}

.panel-paragraph {
  width: 193px;
}
.panel-paragraph > .panel-body {
  padding-left: 2px;
}
.panel-paragraph .rows {
  margin-left: 3px;
}
.panel-paragraph .row {
  padding-left: 4px;
}
.aligns {
  display: flex;
}
.aligns button {
  width: 24px;
  height: 23px;
  padding-left: 1px;
  border: 1px solid #333;
  background: linear-gradient(#6a6a6a, #585858);
}
.aligns .on {
  background: linear-gradient(#86a3d2, #4d6084);
}
.panel-insert {
  width: 122px;
}
.at {
  display: block;
  height: 36px;
  color: #d6d6d6;
  font-family: "Liberation Serif", serif;
  font-size: 32px;
  font-style: italic;
  line-height: 30px;
}
.panel-spell {
  width: 81px;
}
.panel-spell .on {
  width: 38px;
  padding-top: 2px;
  padding-bottom: 1px;
}
.abc {
  fill: #d6d6d6;
  font-family: "Liberation Sans", sans-serif;
  font-size: 15px;
  font-weight: 700;
}
.panel-tools {
  width: 49px;
}
.panel-tools .panel-body {
  justify-content: center;
}
.panel-options {
  width: 71px;
}
.panel-options .row {
  padding-left: 4px;
}
.panel-options .row.on {
  padding: 0 3px;
  margin-left: 1px;
}
.undo-pair {
  display: flex;
  padding-left: 4px;
}
.panel-close {
  width: 71px;
}
.panel-close .big {
  width: 69px;
}

/* document tabs */
.doc-tabs {
  display: flex;
  align-items: flex-end;
  height: 29px;
  padding-left: 18px;
  border-bottom: 4px solid #5b5b5b;
  background-color: #373737;
  color: #b5b5b5;
}
.doc-tabs a {
  width: 127px;
  height: 22px;
  padding-left: 15px;
  border-radius: 12px 12px 0 0;
  background: linear-gradient(#5c5c5c, #505050);
  line-height: 22px;
}
.doc-tabs .current {
  display: flex;
  align-items: center;
  justify-content: space-between;
  padding: 0 15px 0 11px;
  background: linear-gradient(#828282, #5b5b5b);
  color: #fff;
}
.doc-tabs button {
  width: 26px;
  height: 20px;
  margin-left: 2px;
  border-radius: 4px;
  background-color: #4d4d4d;
  color: #ddd;
  font-size: 18px;
  line-height: 18px;
}

/* drawing area */
.canvas {
  position: relative;
  flex: 1;
  overflow: hidden;
  background-color: #212830;
  color: #00ffff;
}
.view-label {
  padding: 6px 4px;
  color: #e6e6e6;
  font-family: "Noto Sans CJK SC", sans-serif;
  font-size: 12px;
}
.geometry {
  position: absolute;
  top: 0;
  left: 0;
}
.thin {
  color: #00d2d2;
  font-family: Roboto, sans-serif;
  font-weight: 300;
  line-height: 20px;
}
.dimension {
  position: absolute;
  top: 78px;
  left: 475px;
  color: #00d2d2;
  font-family: Roboto, sans-serif;
  font-size: 32px;
  font-weight: 300;
  line-height: 36px;
}
.dimension b {
  color: #00ffff;
  font-size: 26px;
  font-weight: 500;
}
.frame {
  position: absolute;
  top: 0;
  left: 124px;
  padding-top: 306px;
  border: 3px solid #fff;
  border-top: 0;
}
.title-block {
  display: flex;
  border-top: 3px solid #fff;
}
.title-block table {
  table-layout: fixed;
  border-spacing: 0;
}
.title-block td, .title-block th {
  padding: 0;
  border: 0 solid #00d800;
  border-width: 0 1px 1px 0;
  font-size: 21px;
  font-weight: 500;
  line-height: 28px;
  text-align: center;
  white-space: pre;
}
.title-block .tb-middle td, .title-block .tb-middle th,
.title-block .tb-right td, .title-block .tb-right th {
  padding-bottom: 6px;
}
.title-block .thin {
  font-size: 25px;
}
.title-block .tb-right .large {
  padding-bottom: 8px;
  font-size: 27px;
}
.title-block .large .thin {
  font-size: 30px;
}
.title-block tr {
  height: 49px;
}
.changes tr:first-child {
  height: 48px;
}
.changes, .signs {
  width: 559px;
}
.signs tr:last-child {
  height: 48px;
}
.signs tr:last-child > *, .tb-middle tr:last-child > *, .tb-right tr:last-child > * {
  border-bottom: 0;
}
.tb-middle {
  width: 351px;
}
.tb-right {
  width: 348px;
}
.tb-right td {
  border-right: 0;
}
.title-block .h195 { height: 195px; }
.title-block .h133 { height: 133px; }
.title-block .h132 { height: 132px; }
.title-block .h70 { height: 70px; }
.title-block .h63 { height: 63px; }
.title-block .h62 { height: 62px; }
.w45 { width: 45px; }
.w46 { width: 46px; }
.w69 { width: 69px; }
.w70 { width: 70px; }
.w83 { width: 83px; }
.w84 { width: 84px; }
.w85 { width: 85px; }
.w112 { width: 112px; }
.w196 { width: 196px; }
.w224 { width: 224px; }
.w236 { width: 236px; }

/* text editor */
.editor {
  position: absolute;
  top: 113px;
  left: 258px;
  right: 8px;
}
.ruler {
  position: relative;
  display: flex;
  height: 30px;
  border: 1px solid #0c0c0c;
  background-color: rgba(61,60,59,.8);
}
.ruler-scale {
  flex: 1;
  min-width: 0;
  height: 20px;
  margin-top: 4px;
  border: 1px solid #a0a0a0;
  outline: 1px solid #222;
}
.indent {
  position: absolute;
  top: 2px;
  left: 26px;
}
.note {
  height: 133px;
  margin: 0 33px 0 28px;
  border: 1px solid #161616;
  border-top: 0;
  background-color: rgba(61,60,59,.8);
  outline: 0;
}
.note p {
  height: 32px;
  font-size: 21px;
  font-weight: 500;
  line-height: 26px;
  white-space: nowrap;
}
.note .thin {
  font-size: 26px;
}
.note-head {
  padding-left: 21px;
}
.num {
  display: inline-block;
  width: 21px;
}
.num-wide {
  width: 24px;
}
.misspelt {
  text-decoration: underline dashed #f00 1px;
  text-underline-offset: 7px;
}
.grip {
  position: absolute;
  right: 34px;
  bottom: 2px;
}
.ibeam {
  position: absolute;
  top: 207px;
  left: 941px;
}
.watermark {
  position: absolute;
  right: 5px;
  bottom: 5px;
  display: flex;
  width: 206px;
  height: 62px;
  background-color: rgba(172,174,172,.54);
}
.watermark-text {
  display: flex;
  flex-direction: column;
  align-items: flex-end;
  margin-left: -5px;
}
.watermark strong {
  padding-right: 12px;
  color: #165634;
  font-size: 30px;
  font-weight: 900;
  line-height: 40px;
}
.watermark span {
  color: #4a6c72;
  font-size: 15px;
}

/* pen remarks */
.remark {
  position: absolute;
  top: 543px;
  left: 30px;
  color: #ed1c24;
  font-size: 24px;
  line-height: 34px;
}
.pen {
  position: absolute;
  top: 0;
  left: -2px;
  z-index: 3;
  fill: none;
  stroke: #ed1c24;
  stroke-linecap: round;
  stroke-linejoin: round;
  pointer-events: none;
}
```
